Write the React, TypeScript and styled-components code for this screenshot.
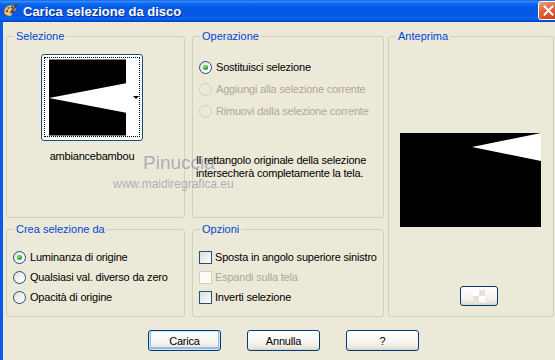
import React from 'react';
import styled, { createGlobalStyle } from 'styled-components';

const GlobalStyle = createGlobalStyle`
    html, body {
        margin: 0;
        padding: 0;
        overflow: hidden;
        background: #ece9d8;
    }
    body {
        font-family: "Liberation Sans", Arial, sans-serif;
        font-size: 11px;
        color: #000;
    }
`;

const Window = styled.div`
    position: relative;
    width: 560px;
    height: 360px;
    display: flex;
    flex-direction: column;
    overflow: hidden;
`;

const TitleBar = styled.div`
    height: 22px;
    flex: none;
    display: flex;
    align-items: center;
    padding: 0 1px 0 2px;
    background: linear-gradient(
        180deg,
        #0a5fe0 0%,
        #3d8ffd 6%,
        #1a76f7 12%,
        #0761ec 22%,
        #0458e2 45%,
        #0659e6 70%,
        #0a63f0 85%,
        #0352d8 94%,
        #0342b8 100%
    );
`;

const TitleText = styled.div`
    flex: 1;
    margin-left: 5px;
    color: #fff;
    font-weight: bold;
    font-size: 13px;
    text-shadow: 1px 1px 0 #0a2a8c;
    white-space: nowrap;
`;

const CloseButton = styled.div`
    width: 21px;
    height: 19px;
    box-sizing: border-box;
    margin-top: -2px;
    border: 1px solid #fff;
    border-radius: 3px;
    background: linear-gradient(160deg, #f0a080 0%, #e2683c 40%, #c7421a 100%);
    display: flex;
    align-items: center;
    justify-content: center;
`;

const Body = styled.div`
    flex: 1;
    background: #ece9d8;
    border-left: 3px solid #0b5ae6;
    padding: 8px 0 0 3px;
`;

const Grid = styled.div`
    display: grid;
    grid-template-columns: 182px 192px 166px;
    grid-template-rows: 188px 94px;
    column-gap: 4px;
    row-gap: 5px;
`;

const Group = styled.fieldset<{ $narrow?: boolean; $tall?: boolean }>`
    margin: 0;
    padding: 0 6px;
    min-width: 0;
    box-sizing: border-box;
    border: 1px solid #d0d0bf;
    border-radius: 3px;
    width: ${({ $narrow }) => ($narrow ? '179px' : 'auto')};
    grid-row: ${({ $tall }) => ($tall ? '1 / span 2' : 'auto')};
    grid-column: ${({ $tall }) => ($tall ? '3' : 'auto')};
`;

const Legend = styled.legend`
    color: #0046d5;
    padding: 0 2px;
    margin-left: 1px;
    font-size: 11px;
    line-height: 13px;
`;

const OptionList = styled.div<{ $top: number; $gap: number }>`
    display: flex;
    flex-direction: column;
    padding-top: ${({ $top }) => $top}px;
    gap: ${({ $gap }) => $gap}px;
`;

const Option = styled.div<{ $disabled?: boolean; $gap?: number }>`
    display: flex;
    align-items: center;
    gap: ${({ $gap }) => $gap ?? 4}px;
    height: 13px;
    line-height: 13px;
    white-space: nowrap;
    letter-spacing: -0.2px;
    color: ${({ $disabled }) => ($disabled ? '#aca899' : '#000')};
`;

const Radio = styled.span<{ $checked?: boolean; $disabled?: boolean }>`
    position: relative;
    flex: none;
    width: 13px;
    height: 13px;
    box-sizing: border-box;
    border-radius: 50%;
    border: 1px solid ${({ $disabled }) => ($disabled ? '#d2cfc0' : '#1c5180')};
    background: ${({ $disabled }) =>
        $disabled ? '#ece9d8' : 'linear-gradient(135deg, #dcdcd7 0%, #f4f4f0 55%, #ffffff 100%)'};

    &::after {
        content: '';
        display: ${({ $checked }) => ($checked ? 'block' : 'none')};
        position: absolute;
        left: 3px;
        top: 3px;
        width: 5px;
        height: 5px;
        border-radius: 50%;
        background: radial-gradient(circle at 35% 35%, #7de07d 0%, #2ea82e 60%, #178717 100%);
    }
`;

const Checkbox = styled.span<{ $disabled?: boolean }>`
    flex: none;
    width: 13px;
    height: 13px;
    box-sizing: border-box;
    border: 1px solid ${({ $disabled }) => ($disabled ? '#d2cfc0' : '#1c5180')};
    background: ${({ $disabled }) =>
        $disabled ? '#fbfbf8' : 'linear-gradient(135deg, #dcdcd7 0%, #f2f2ee 60%, #ffffff 100%)'};
`;

const Note = styled.p`
    margin: 36px 0 0 -3px;
    width: 180px;
    line-height: 13px;
    letter-spacing: -0.2px;
`;

const PickerColumn = styled.div`
    display: inline-flex;
    flex-direction: column;
    align-items: center;
    margin: 11px 0 0 28px;
`;

const PickerButton = styled.div`
    width: 102px;
    height: 87px;
    box-sizing: border-box;
    border: 1px solid #1c4e80;
    border-radius: 3px;
    background: #fff;
    padding: 2px 2px 3px;
`;

const PickerFocus = styled.div`
    height: 100%;
    box-sizing: border-box;
    border: 1px dotted #000;
    padding-left: 4px;
    display: flex;
    align-items: center;
`;

const Arrow = styled.span`
    margin-left: 7px;
    width: 0;
    height: 0;
    border-left: 3px solid transparent;
    border-right: 3px solid transparent;
    border-top: 3px solid #000;
`;

const PickerLabel = styled.div`
    margin-top: 9px;
    line-height: 13px;
    letter-spacing: -0.2px;
`;

const Preview = styled.svg`
    display: block;
    margin: 90px 0 0 5px;
`;

const Button = styled.button<{ $default?: boolean }>`
    width: 73px;
    height: 21px;
    padding: 0;
    box-sizing: border-box;
    border: 1px solid #003c74;
    border-radius: 3px;
    background: linear-gradient(180deg, #ffffff 0%, #f5f4ef 60%, #e8e6dc 88%, #d6d0c5 100%);
    font-family: "Liberation Sans", Arial, sans-serif;
    font-size: 11px;
    letter-spacing: -0.2px;
    color: #000;
    box-shadow: ${({ $default }) =>
        $default ? 'inset 0 0 0 1px #cee7ff, inset 0 -1px 0 2px #98b8ea' : 'none'};
`;

const SmallButton = styled(Button)`
    display: flex;
    align-items: center;
    justify-content: center;
    width: 38px;
    height: 20px;
    margin: 59px 0 0 65px;
`;

const ButtonRow = styled.div`
    display: flex;
    gap: 26px;
    margin: 13px 0 0 142px;
`;

const Watermark = styled.div<{ $left: number; $top: number; $size: number }>`
    position: absolute;
    left: ${({ $left }) => $left}px;
    top: ${({ $top }) => $top}px;
    font-size: ${({ $size }) => $size}px;
    color: rgba(110, 110, 150, 0.5);
    white-space: nowrap;
    pointer-events: none;
`;

const PaletteIcon = () => (
    <svg width="16" height="16" viewBox="0 0 16 16">
        <path d="M2 9c0-4 3-7 7-7 3 0 5 2 5 4 0 2-2 2-3 2-1 0-1.5 1-1 2 .6 1.2 0 3-2 3C4.5 13 2 11.5 2 9z" fill="#e7c98d" stroke="#7a5a22" strokeWidth="0.8" />
        <circle cx="5" cy="8" r="1.2" fill="#e02020" />
        <circle cx="6.5" cy="5" r="1.2" fill="#20a020" />
        <circle cx="10" cy="4.3" r="1.2" fill="#2050e0" />
        <circle cx="5.8" cy="11" r="1.1" fill="#f0d020" />
        <path d="M15 1 8.5 10" stroke="#5a3a10" strokeWidth="1.6" />
        <path d="M8.5 10 7 13" stroke="#c0c0c0" strokeWidth="1.8" />
    </svg>
);

const CloseIcon = () => (
    <svg width="11" height="11" viewBox="0 0 11 11">
        <path d="M1.5 1.5l8 8M9.5 1.5l-8 8" stroke="#fff" strokeWidth="2" strokeLinecap="square" />
    </svg>
);

const CheckerIcon = () => (
    <svg width="12" height="12" viewBox="0 0 12 12">
        <rect x="0" y="0" width="6" height="6" fill="#ffffff" />
        <rect x="6" y="0" width="6" height="6" fill="#e4e2da" />
        <rect x="0" y="6" width="6" height="6" fill="#e4e2da" />
        <rect x="6" y="6" width="6" height="6" fill="#ffffff" />
    </svg>
);

export default function App() {
    return (
        <>
            <GlobalStyle />
            <Window>
                <TitleBar>
                    <PaletteIcon />
                    <TitleText>Carica selezione da disco</TitleText>
                    <CloseButton>
                        <CloseIcon />
                    </CloseButton>
                </TitleBar>
                <Body>
                    <Grid>
                        <Group $tall>
                            <Legend>Anteprima</Legend>
                            <Preview width="141" height="94" viewBox="0 0 141 94">
                                <rect width="141" height="94" fill="#000" />
                                <polygon points="72,14 141,0 141,28" fill="#fff" />
                            </Preview>
                            <SmallButton>
                                <CheckerIcon />
                            </SmallButton>
                        </Group>

                        <Group $narrow>
                            <Legend>Selezione</Legend>
                            <PickerColumn>
                                <PickerButton>
                                    <PickerFocus>
                                        <svg width="78" height="77" viewBox="0 0 78 77">
                                            <rect width="78" height="77" fill="#000" />
                                            <polygon points="0,39 78,24 78,54" fill="#fff" />
                                        </svg>
                                        <Arrow />
                                    </PickerFocus>
                                </PickerButton>
                                <PickerLabel>ambiancebambou</PickerLabel>
                            </PickerColumn>
                        </Group>

                        <Group>
                            <Legend>Operazione</Legend>
                            <OptionList $top={18} $gap={9}>
                                <Option>
                                    <Radio $checked />
                                    Sostituisci selezione
                                </Option>
                                <Option $disabled>
                                    <Radio $disabled />
                                    Aggiungi alla selezione corrente
                                </Option>
                                <Option $disabled>
                                    <Radio $disabled />
                                    Rimuovi dalla selezione corrente
                                </Option>
                            </OptionList>
                            <Note>
                                Il rettangolo originale della selezione intersecherà completamente la tela.
                            </Note>
                        </Group>

                        <Group $narrow>
                            <Legend>Crea selezione da</Legend>
                            <OptionList $top={15} $gap={7}>
                                <Option>
                                    <Radio $checked />
                                    Luminanza di origine
                                </Option>
                                <Option>
                                    <Radio />
                                    Qualsiasi val. diverso da zero
                                </Option>
                                <Option>
                                    <Radio />
                                    Opacità di origine
                                </Option>
                            </OptionList>
                        </Group>

                        <Group>
                            <Legend>Opzioni</Legend>
                            <OptionList $top={15} $gap={7}>
                                <Option $gap={3}>
                                    <Checkbox />
                                    Sposta in angolo superiore sinistro
                                </Option>
                                <Option $gap={3} $disabled>
                                    <Checkbox $disabled />
                                    Espandi sulla tela
                                </Option>
                                <Option $gap={3}>
                                    <Checkbox />
                                    Inverti selezione
                                </Option>
                            </OptionList>
                        </Group>
                    </Grid>
                    <ButtonRow>
                        <Button $default>Carica</Button>
                        <Button>Annulla</Button>
                        <Button>?</Button>
                    </ButtonRow>
                </Body>
                <Watermark $left={143} $top={152} $size={19}>
                    Pinuccia
                </Watermark>
                <Watermark $left={113} $top={177} $size={12}>
                    www.maidiregrafica.eu
                </Watermark>
            </Window>
        </>
    );
}
